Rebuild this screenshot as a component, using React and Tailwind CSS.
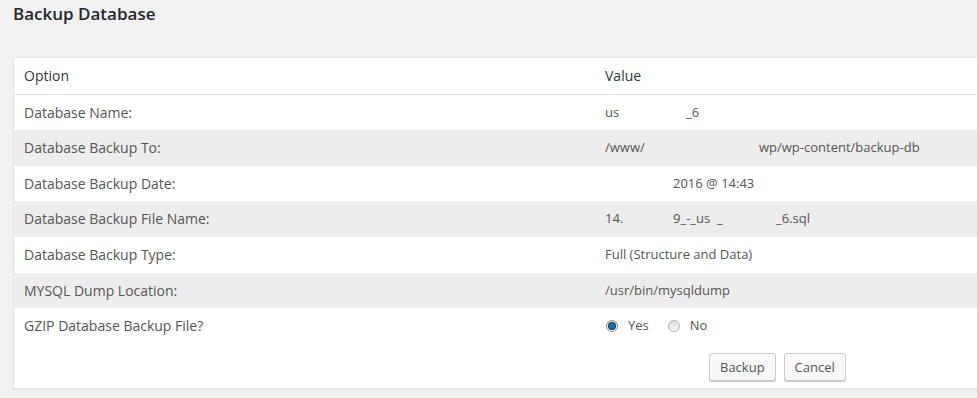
export default function App() {
  const font = { fontFamily: '"Open Sans", "Liberation Sans", sans-serif' };
  const rows = [
    {
      label: "Database Name:",
      value: (
        <>
          <span className="inline-block w-[81px]">us</span>_6
        </>
      ),
    },
    {
      label: "Database Backup To:",
      value: (
        <>
          <span className="inline-block w-[154px]">/www/</span>wp/wp-content/backup-db
        </>
      ),
    },
    {
      label: "Database Backup Date:",
      value: (
        <>
          <span className="inline-block w-[68px]"></span>2016 @ 14:43
        </>
      ),
    },
    {
      label: "Database Backup File Name:",
      value: (
        <>
          <span className="inline-block w-[68px]">14.</span>
          <span className="inline-block w-[103px] whitespace-pre">9_-_us  _</span>_6.sql
        </>
      ),
    },
    { label: "Database Backup Type:", value: "Full (Structure and Data)" },
    { label: "MYSQL Dump Location:", value: "/usr/bin/mysqldump" },
  ];

  return (
    <div
      className="w-[977px] h-[398px] overflow-hidden bg-[#f1f1f1] text-[#555]"
      style={font}
    >
      <h2 className="pl-[13px] pt-[3px] text-[17px] leading-[22px] font-semibold text-[#23282d]">
        Backup Database
      </h2>
      <div className="mt-[32px] ml-[13px] w-[1100px] bg-white border border-[#e5e5e5] shadow-[0_1px_1px_rgba(0,0,0,0.04)]">
        <div className="grid grid-cols-[581px_1fr] border-b border-[#e1e1e1] text-[14px] leading-[19.6px] text-[#32373c]">
          <div className="px-[10px] py-[8px]">Option</div>
          <div className="px-[10px] py-[8px]">Value</div>
        </div>
        {rows.map((r, i) => (
          <div
            key={i}
            className={
              "grid grid-cols-[581px_1fr] text-[14px] leading-[19.6px] " +
              (i % 2 === 1 ? "bg-[#ededed]" : "bg-white")
            }
          >
            <div className="px-[10px] py-[8px]">{r.label}</div>
            <div className="px-[10px] py-[8px] whitespace-nowrap text-[13px]">{r.value}</div>
          </div>
        ))}
        <div className="grid grid-cols-[581px_1fr] text-[14px] leading-[19.6px] bg-white">
          <div className="px-[10px] pt-[8px]">GZIP Database Backup File?</div>
          <div className="px-[10px] pt-[8px] pb-[7px]">
            <div className="flex items-center h-[19.6px] text-[13px]">
              <span className="relative ml-[1px] inline-flex items-center justify-center w-[12px] h-[12px] rounded-full border border-[#8c8c8c] bg-gradient-to-b from-[#e6e6e6] to-[#ffffff]">
                <span className="w-[6px] h-[6px] rounded-full bg-[#1e6fa8] shadow-[0_0_0_1px_#10385a]"></span>
              </span>
              <span className="ml-[10px]">Yes</span>
              <span className="ml-[19px] inline-block w-[12px] h-[12px] rounded-full border border-[#b5b5b5] bg-gradient-to-b from-[#dcdcdc] to-[#f8f8f8]"></span>
              <span className="ml-[10px]">No</span>
            </div>
            <div className="flex gap-[8px] mt-[17px] ml-[104px]">
              <button className="h-[28px] px-[10px] pb-[1px] text-[13px] leading-[26px] text-[#555] bg-[#f7f7f7] border border-[#cccccc] rounded-[3px] shadow-[0_1px_0_#cccccc]">
                Backup
              </button>
              <button className="h-[28px] px-[10px] pb-[1px] text-[13px] leading-[26px] text-[#555] bg-[#f7f7f7] border border-[#cccccc] rounded-[3px] shadow-[0_1px_0_#cccccc]">
                Cancel
              </button>
            </div>
          </div>
        </div>
      </div>
    </div>
  );
}
